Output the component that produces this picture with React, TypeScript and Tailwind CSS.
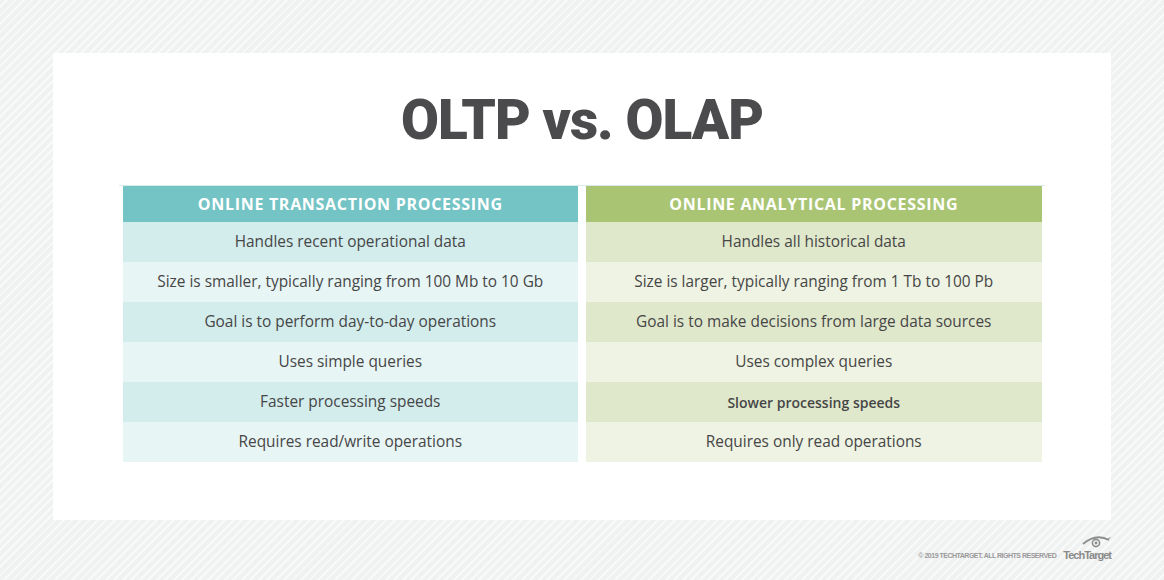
import React from "react";

const left = [
  "Handles recent operational data",
  "Size is smaller, typically ranging from 100 Mb to 10 Gb",
  "Goal is to perform day-to-day operations",
  "Uses simple queries",
  "Faster processing speeds",
  "Requires read/write operations",
];
const right = [
  "Handles all historical data",
  "Size is larger, typically ranging from 1 Tb to 100 Pb",
  "Goal is to make decisions from large data sources",
  "Uses complex queries",
  "Slower processing speeds",
  "Requires only read operations",
];

function Column({
  title,
  items,
  head,
  dark,
  light,
}: {
  title: string;
  items: string[];
  head: string;
  dark: string;
  light: string;
}) {
  return (
    <div className="flex flex-col">
      <div
        className={`h-[36px] flex items-center justify-center text-white font-bold text-[16px] tracking-[0.7px] ${head}`}
        style={{ fontFamily: '"Open Sans", "Liberation Sans", sans-serif' }}
      >
        {title}
      </div>
      {items.map((t, i) => (
        <div
          key={i}
          className={`h-[40px] flex items-center justify-center text-[#464646] ${
            i % 2 === 0 ? dark : light
          } ${t === "Slower processing speeds" ? "text-[14px] font-semibold" : "text-[15.4px]"}`}
        >
          {t}
        </div>
      ))}
    </div>
  );
}

export default function App() {
  return (
    <div
      className="w-[1164px] h-[580px] flex flex-col px-[53px] pt-[53px] bg-[#f0f2f1] bg-[repeating-linear-gradient(135deg,#f0f2f1_0px,#f0f2f1_4px,#f8f9f9_4px,#f8f9f9_6px)]"
      style={{ fontFamily: '"Open Sans", "Liberation Sans", sans-serif' }}
    >
      <div className="h-[467px] bg-white flex flex-col items-center pt-[40px]">
        <h1
          className="text-[55px] leading-none font-black text-[#4b4b4d] tracking-[-1px]"
          style={{ fontFamily: 'Roboto, "Liberation Sans", sans-serif' }}
        >
          OLTP vs. OLAP
        </h1>
        <div className="mt-[37px] w-[926px] border-t border-[#d8ecea] flex justify-center">
          <div className="w-[919px] grid grid-cols-2 gap-x-[8px]">
            <Column
              title="ONLINE TRANSACTION PROCESSING"
              items={left}
              head="bg-[#74c3c5]"
              dark="bg-[#d3ecec]"
              light="bg-[#e8f5f5]"
            />
            <Column
              title="ONLINE ANALYTICAL PROCESSING"
              items={right}
              head="bg-[#a9c574]"
              dark="bg-[#e0e8cc]"
              light="bg-[#eef3e3]"
            />
          </div>
        </div>
      </div>
      <div className="flex justify-end items-end gap-[7px] mt-[16px]">
        <span
          className="text-[7px] leading-none font-bold text-[#9a9a9a] tracking-[-0.5px] mb-[2px]"
          style={{ fontFamily: '"Liberation Sans", sans-serif' }}
        >
          © 2019 TECHTARGET. ALL RIGHTS RESERVED
        </span>
        <div className="flex flex-col items-end">
          <svg width="29" height="12" viewBox="0 0 29 12">
            <path d="M1 8 Q14 -3 27 4" fill="none" stroke="#8d8d8d" strokeWidth="1.8" />
            <path d="M26 3 L28.5 1.5" stroke="#8d8d8d" strokeWidth="1" />
            <circle cx="14" cy="7" r="3.6" fill="none" stroke="#8d8d8d" strokeWidth="1.6" />
            <circle cx="14" cy="7" r="1.4" fill="#8d8d8d" />
          </svg>
          <span
            className="text-[11px] leading-none font-bold text-[#8a8a8a] tracking-[-1px] mt-[2px]"
            style={{ fontFamily: '"Liberation Sans", sans-serif' }}
          >
            TechTarget
          </span>
        </div>
      </div>
    </div>
  );
}
